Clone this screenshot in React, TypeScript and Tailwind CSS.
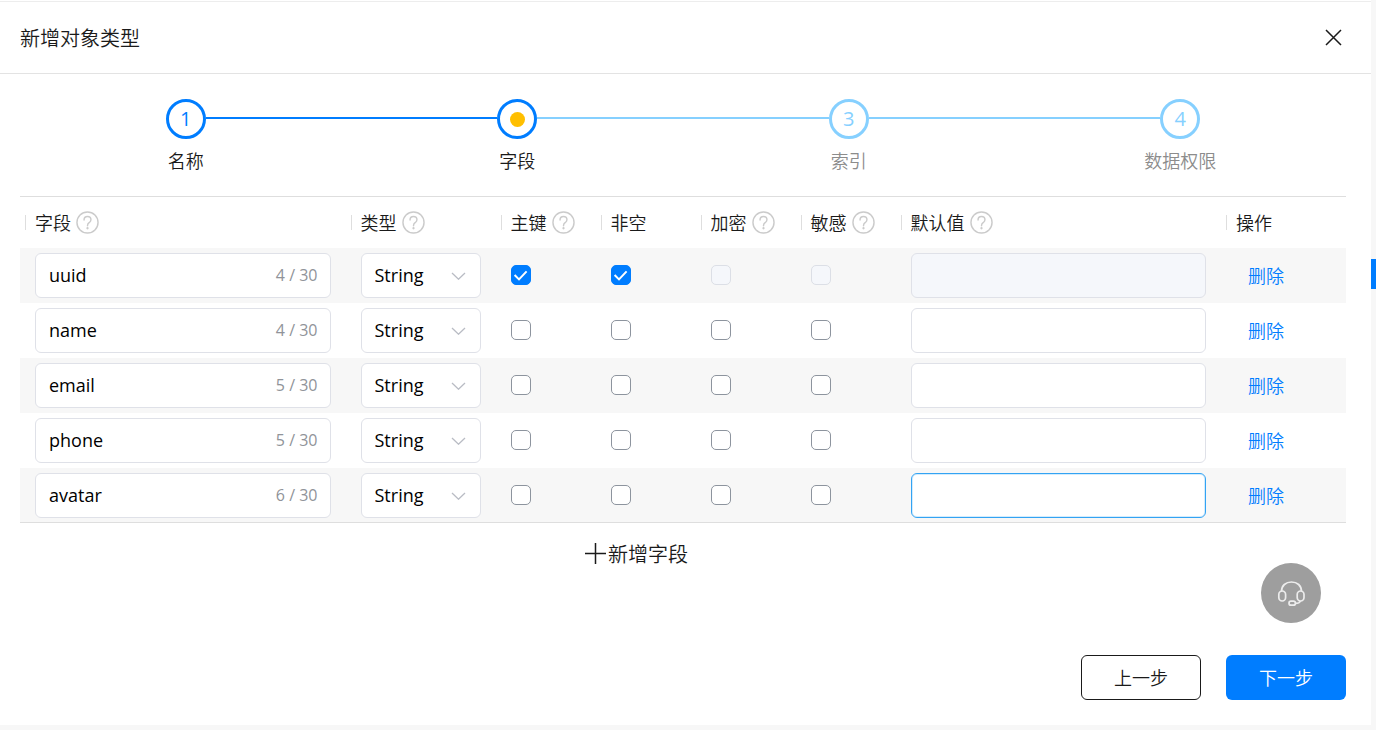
import { useState } from 'react';
import clsx from 'clsx';

type FlagKey = 'primary' | 'notNull' | 'encrypted' | 'sensitive';

type Field = {
    name: string;
    length: number;
    type: string;
    flags: Record<FlagKey, boolean>;
    locked?: boolean;
    active?: boolean;
    defaultValue: string;
};

const NO_FLAGS = { primary: false, notNull: false, encrypted: false, sensitive: false };

const FLAGS: { key: FlagKey; label: string }[] = [
    { key: 'primary', label: '主键' },
    { key: 'notNull', label: '非空' },
    { key: 'encrypted', label: '加密' },
    { key: 'sensitive', label: '敏感' },
];

const INITIAL_FIELDS: Field[] = [
    { name: 'uuid', length: 4, type: 'String', flags: { ...NO_FLAGS, primary: true, notNull: true }, locked: true, defaultValue: '' },
    { name: 'name', length: 4, type: 'String', flags: NO_FLAGS, defaultValue: '' },
    { name: 'email', length: 5, type: 'String', flags: NO_FLAGS, defaultValue: '' },
    { name: 'phone', length: 5, type: 'String', flags: NO_FLAGS, defaultValue: '' },
    { name: 'avatar', length: 6, type: 'String', flags: NO_FLAGS, active: true, defaultValue: '' },
];

const COLUMNS = [
    { label: '字段', help: true, width: '' },
    { label: '类型', help: true, width: 'w-[150px]' },
    { label: '主键', help: true, width: 'w-[100px]' },
    { label: '非空', help: false, width: 'w-[100px]' },
    { label: '加密', help: true, width: 'w-[100px]' },
    { label: '敏感', help: true, width: 'w-[100px]' },
    { label: '默认值', help: true, width: '' },
    { label: '操作', help: false, width: 'w-[125px]' },
];

const STEPS = ['名称', '字段', '索引', '数据权限'];
const CURRENT_STEP = 1;

function HelpIcon() {
    return (
        <svg className="size-[23px] shrink-0" viewBox="0 0 24 24" fill="none" stroke="#cbcbcb" strokeWidth={1.5}>
            <circle cx="12" cy="12" r="11" />
            <path d="M8.4 9.3C8.4 7.2 9.9 5.8 12 5.8s3.6 1.4 3.6 3.3c0 1.5-.9 2.3-1.9 3.1-1.1.8-1.7 1.5-1.7 3.1" strokeLinecap="round" />
            <circle cx="12" cy="18" r="1.2" fill="#cbcbcb" stroke="none" />
        </svg>
    );
}

function Checkbox({ label, checked, disabled, onChange }: { label: string; checked: boolean; disabled: boolean; onChange: () => void }) {
    return (
        <label className="grid size-5">
            <input
                type="checkbox"
                aria-label={label}
                checked={checked}
                disabled={disabled}
                onChange={onChange}
                className="col-start-1 row-start-1 size-5 appearance-none rounded-[5px] border border-[#8d949e] bg-white checked:border-[#007dff] checked:bg-[#007dff] disabled:border-[#dcdfe6] disabled:bg-[#f5f7fb]"
            />
            {checked && (
                <svg className="pointer-events-none col-start-1 row-start-1 size-5" viewBox="0 0 20 20" fill="none" stroke="#fff" strokeWidth={2}>
                    <path d="M3.6 10 8 14.4 15.6 6.400" />
                </svg>
            )}
        </label>
    );
}

function Steps() {
    return (
        <ol className="grid grid-cols-4 pt-[25px]">
            {STEPS.map((label, i) => {
                const reached = i <= CURRENT_STEP;
                return (
                    <li key={label} className="flex flex-col items-center gap-2">
                        <div className="flex w-full items-center">
                            <span className={clsx('mb-0.5 h-0.5 flex-1', i > 0 && (reached ? 'bg-[#007dff]' : 'bg-[#86d0ff]'))} />
                            <span
                                className={clsx(
                                    'flex size-10 items-center justify-center rounded-full border-3 text-xl',
                                    reached ? 'border-[#007dff] text-[#007dff]' : 'border-[#86d0ff] text-[#86d0ff]'
                                )}
                            >
                                {i === CURRENT_STEP ? <span className="size-[15px] rounded-full bg-[#ffbf00]" /> : i + 1}
                            </span>
                            <span
                                className={clsx(
                                    'mb-0.5 h-0.5 flex-1',
                                    i < STEPS.length - 1 && (i < CURRENT_STEP ? 'bg-[#007dff]' : 'bg-[#86d0ff]')
                                )}
                            />
                        </div>
                        <span className={clsx('text-lg font-[350]', reached ? 'text-[#1a1a1a]' : 'text-[#8c8c8c]')}>{label}</span>
                    </li>
                );
            })}
        </ol>
    );
}

export default function App() {
    const [fields, setFields] = useState(INITIAL_FIELDS);

    const update = (index: number, patch: Partial<Field>) =>
        setFields((list) => list.map((f, i) => (i === index ? { ...f, ...patch } : f)));

    const addField = () =>
        setFields((list) => [...list, { name: '', length: 0, type: 'String', flags: NO_FLAGS, defaultValue: '' }]);

    return (
        <div className="relative flex min-h-screen flex-col bg-[#f7f7f7] pr-[5px] pb-[5px] font-['Open_Sans','Noto_Sans_CJK_SC',sans-serif] text-[#1a1a1a]">
            <div className="h-px bg-white" />
            <main className="flex flex-1 flex-col border-t border-[#ededed] bg-white">
                <header className="flex h-[72px] items-center justify-between border-b border-[#e3e3e3] pr-[29px] pl-5">
                    <h1 className="pt-0.5 text-xl font-[350]">新增对象类型</h1>
                    <button type="button" aria-label="关闭">
                        <svg className="size-[17px]" viewBox="0 0 17 17" fill="none" stroke="#1a1a1a" strokeWidth={1.5}>
                            <path d="M1 1 16 16M16 1 1 16" />
                        </svg>
                    </button>
                </header>

                <div className="flex flex-1 flex-col pr-[25px] pb-[25px] pl-5">
                    <Steps />

                    <table className="mt-[21px] w-full table-fixed border-separate border-spacing-0 border-t border-[#dedede]">
                        <thead>
                            <tr>
                                {COLUMNS.map((col) => (
                                    <th key={col.label} className={clsx('h-[51px] p-0 pl-[5px] text-left text-lg font-[350]', col.width)}>
                                        <div className="flex items-center whitespace-nowrap">
                                            <span className="mr-[9px] h-[15px] w-px bg-[#dedede]" />
                                            <span className="mr-[5px]">{col.label}</span>
                                            {col.help && <HelpIcon />}
                                        </div>
                                    </th>
                                ))}
                            </tr>
                        </thead>
                        <tbody>
                            {fields.map((field, i) => (
                                <tr key={i} className="odd:bg-[#f7f7f7] last:shadow-[inset_0_-1px_0_#dedede]">
                                    <td className="px-[15px] py-[5px]">
                                        <div className="flex h-[45px] items-center rounded-md border border-[#dfe1e8] bg-white pr-3 pb-0.5 pl-[13px]">
                                            <input
                                                type="text"
                                                aria-label="字段"
                                                maxLength={30}
                                                value={field.name}
                                                onChange={(e) => update(i, { name: e.target.value, length: e.target.value.length })}
                                                className="w-full min-w-0 flex-1 text-lg text-black outline-none"
                                            />
                                            <span className="text-base text-[#909399]">{field.length} / 30</span>
                                        </div>
                                    </td>
                                    <td className="px-[15px] py-[5px]">
                                        <div className="grid items-center">
                                            <select
                                                aria-label="类型"
                                                value={field.type}
                                                onChange={(e) => update(i, { type: e.target.value })}
                                                className="col-start-1 row-start-1 h-[45px] w-full appearance-none rounded-md border border-[#dfe1e8] bg-white pb-0.5 pl-[13px] text-lg text-black"
                                            >
                                                <option>String</option>
                                                <option>Integer</option>
                                                <option>Boolean</option>
                                                <option>Date</option>
                                            </select>
                                            <svg
                                                className="pointer-events-none col-start-1 row-start-1 mr-[15px] h-2 w-[15px] justify-self-end"
                                                viewBox="0 0 15 8"
                                                fill="none"
                                                stroke="#b9bcc4"
                                                strokeWidth={1.3}
                                            >
                                                <path d="M1 1 7.5 7.2 14 1" />
                                            </svg>
                                        </div>
                                    </td>
                                    {FLAGS.map(({ key, label }) => (
                                        <td key={key} className="py-0 pr-0 pb-0.5 pl-[15px]">
                                            <Checkbox
                                                label={label}
                                                checked={field.flags[key]}
                                                disabled={!!field.locked && !field.flags[key]}
                                                onChange={() => update(i, { flags: { ...field.flags, [key]: !field.flags[key] } })}
                                            />
                                        </td>
                                    ))}
                                    <td className="px-[15px] py-[5px]">
                                        <input
                                            type="text"
                                            aria-label="默认值"
                                            disabled={field.locked}
                                            value={field.defaultValue}
                                            onChange={(e) => update(i, { defaultValue: e.target.value })}
                                            className={clsx(
                                                'block h-[45px] w-full rounded-md border bg-white px-3 text-lg text-black outline-none disabled:bg-[#f5f7fb]',
                                                field.active ? 'border-[#33a3f3] shadow-[inset_0_0_0_1px_#d3ecfd]' : 'border-[#dfe1e8]'
                                            )}
                                        />
                                    </td>
                                    <td className="p-0 pl-[27px]">
                                        <button
                                            type="button"
                                            className="text-lg font-[350] text-[#007dff]"
                                            onClick={() => setFields((list) => list.filter((_, n) => n !== i))}
                                        >
                                            删除
                                        </button>
                                    </td>
                                </tr>
                            ))}
                        </tbody>
                    </table>

                    <div className="flex justify-center pt-4 pr-[93px]">
                        <button type="button" onClick={addField} className="flex items-center gap-px text-xl font-[350]">
                            <svg className="size-[22px]" viewBox="0 0 22 22" fill="none" stroke="#1a1a1a" strokeWidth={1.5}>
                                <path d="M0 10.500h21M10.500 0v21" />
                            </svg>
                            <span className="pt-0.5">新增字段</span>
                        </button>
                    </div>

                    <footer className="mt-auto flex justify-end gap-[25px] pt-5">
                        <button type="button" className="h-[45px] w-[120px] rounded-md border border-[#1a1a1a] bg-white text-lg font-[350]">
                            上一步
                        </button>
                        <button type="button" className="h-[45px] w-[120px] rounded-md bg-[#007dff] text-lg font-[350] text-white">
                            下一步
                        </button>
                    </footer>
                </div>
            </main>

            {/* edge tab of the side drawer */}
            <div className="absolute top-[259px] right-0 h-[30px] w-[5px] bg-[#007dff]" />

            <button
                type="button"
                aria-label="在线客服"
                className="absolute right-[55px] bottom-[107px] flex size-[60px] items-center justify-center rounded-full bg-[#9e9e9e]"
            >
                <svg className="size-7" viewBox="0 0 28 28" fill="none" stroke="#ececec" strokeWidth={1.7}>
                    <path d="M4.500 12.500C4.500 6.500 8.800 3 14.500 3s10 3.500 10 9.500" />
                    <rect x="1.800" y="12" width="6.800" height="10" rx="3.400" />
                    <rect x="20.200" y="12" width="6.800" height="10" rx="3.400" />
                    <path d="M23.500 22c-.8 1.800-2.500 2.400-5 2.400" />
                    <rect x="12" y="22.200" width="6.400" height="4" rx="2" />
                </svg>
            </button>
        </div>
    );
}
